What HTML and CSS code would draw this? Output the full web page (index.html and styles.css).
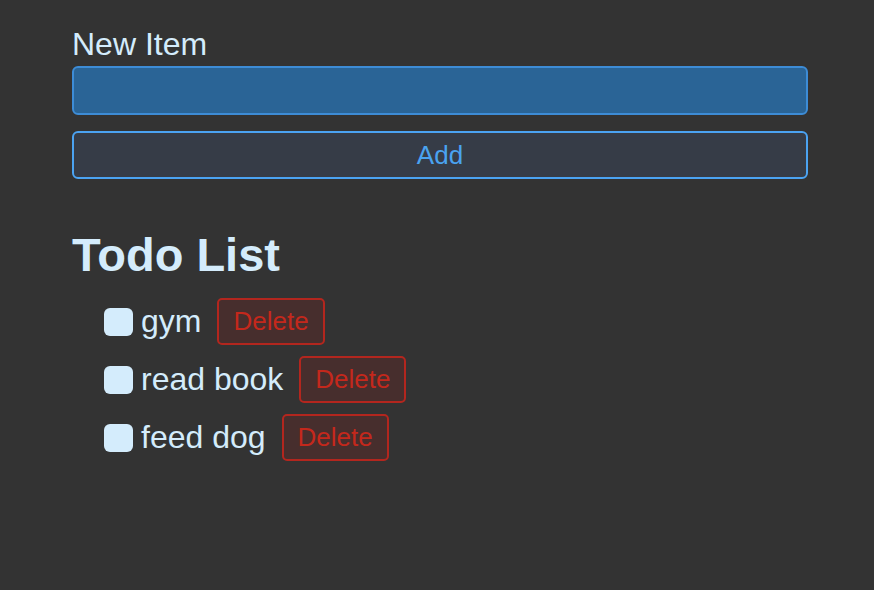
FILE: index.html
```html
<!DOCTYPE html>
<html>
<head>
<meta charset="utf-8">
<link rel="stylesheet" href="styles.css">
</head>
<body>
<main class="app">
  <form class="new-form" onsubmit="return false">
    <label class="label" for="item">New Item</label>
    <input class="text-input" id="item" type="text">
    <button class="add-btn" type="button">Add</button>
  </form>
  <h1 class="title">Todo List</h1>
  <ul class="list">
    <li class="row"><input class="check" type="checkbox"><span class="name">gym</span><button class="del" type="button">Delete</button></li>
    <li class="row"><input class="check" type="checkbox"><span class="name">read book</span><button class="del" type="button">Delete</button></li>
    <li class="row"><input class="check" type="checkbox"><span class="name">feed dog</span><button class="del" type="button">Delete</button></li>
  </ul>
</main>
</body>
</html>
```

FILE: styles.css
```css
html, body {
  margin: 0;
  padding: 0;
  background: #333333;
  font-family: "Liberation Sans", Arial, Helvetica, sans-serif;
}
.app {
  width: 736px;
  padding: 26px 0 0 72px;
}
.new-form {
  display: flex;
  flex-direction: column;
}
.label {
  color: #d4ecfc;
  font-size: 32px;
  line-height: 37px;
  margin-bottom: 3px;
}
.text-input {
  box-sizing: border-box;
  height: 49px;
  margin: 0;
  background: #2a6496;
  border: 2px solid #3d8cd6;
  border-radius: 6px;
  outline: none;
  color: #d4ecfc;
  font: inherit;
}
.add-btn {
  box-sizing: border-box;
  height: 48px;
  margin-top: 16px;
  background: #363c47;
  border: 2px solid #4ba3f2;
  border-radius: 6px;
  color: #4aa3f0;
  font-family: inherit;
  font-size: 26px;
  padding: 0;
}
.title {
  margin: 50px 0 17px;
  color: #d4ecfc;
  font-size: 47px;
  line-height: 52px;
  font-weight: bold;
}
.list {
  list-style: none;
  margin: 0;
  padding: 0 0 0 32px;
  display: flex;
  flex-direction: column;
  gap: 11px;
}
.row {
  display: flex;
  align-items: center;
  height: 47px;
}
.check {
  appearance: none;
  -webkit-appearance: none;
  width: 29px;
  height: 28px;
  margin: 0 8px 0 0;
  border-radius: 6px;
  background: #d4ecfc;
  border: none;
}
.name {
  color: #d4ecfc;
  font-size: 32px;
  line-height: 37px;
  margin-right: 16px;
}
.del {
  box-sizing: border-box;
  height: 47px;
  padding: 0 14px;
  background: #472e2d;
  border: 2px solid #b3261e;
  border-radius: 5px;
  color: #c4281c;
  font-family: inherit;
  font-size: 26px;
}
```
